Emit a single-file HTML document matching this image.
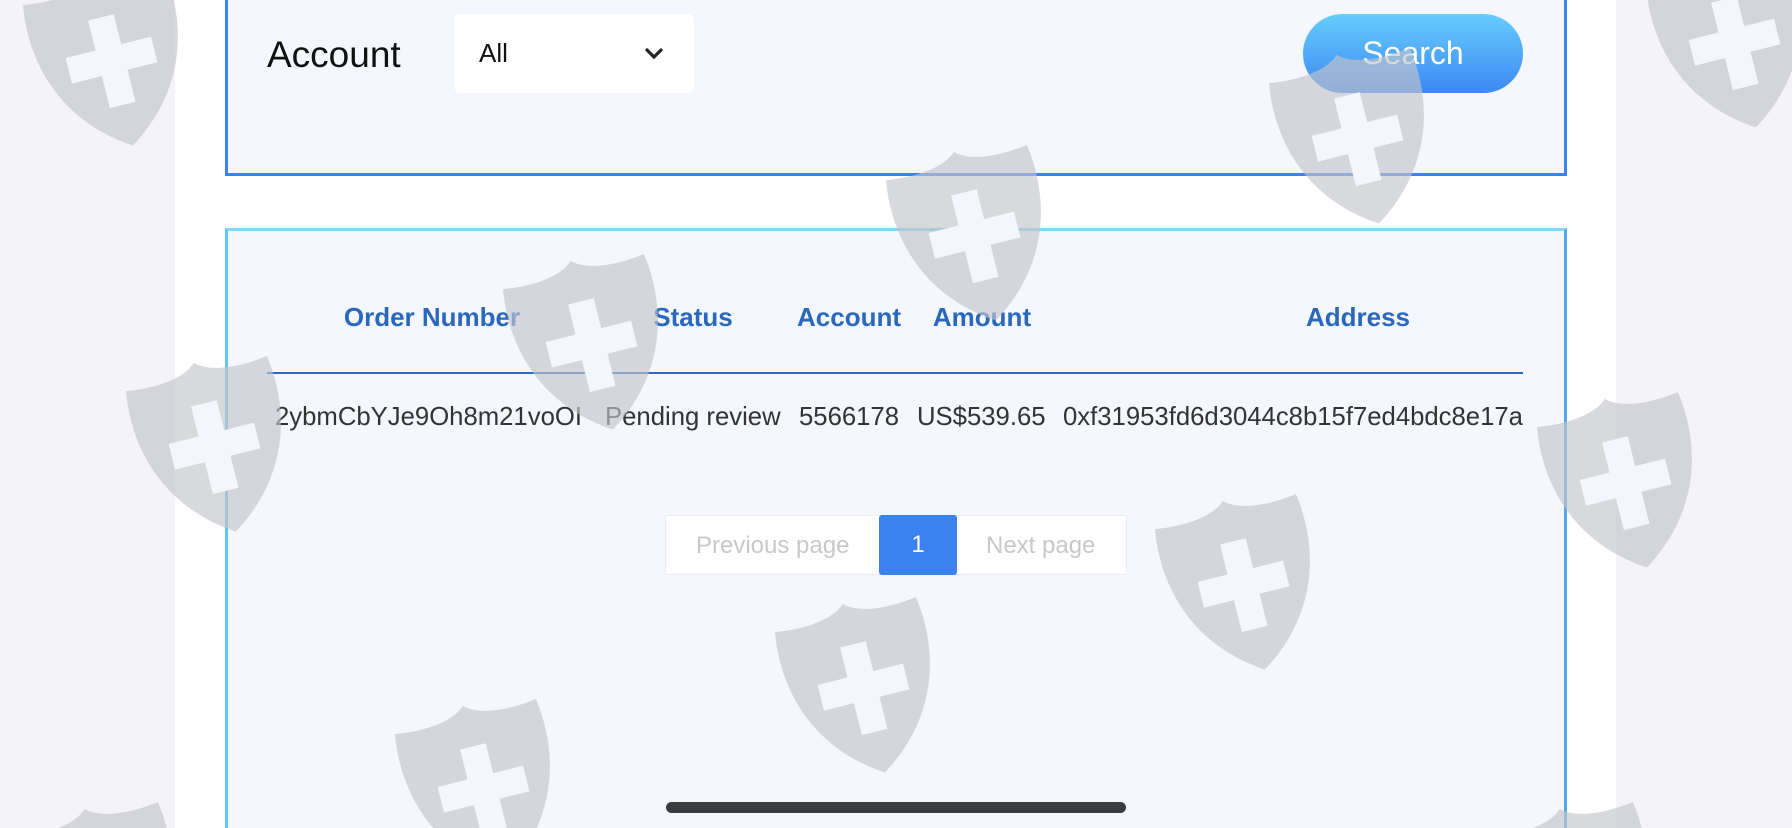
<!DOCTYPE html>
<html><head><meta charset="utf-8"><style>
*{margin:0;padding:0;box-sizing:border-box}
html{width:1792px;height:828px;overflow:hidden}
body{width:1792px;height:828px;overflow:hidden;background:#f4f3fc;font-family:"Liberation Sans",Arial,sans-serif;position:relative}
.clip{position:absolute;left:0;top:0;width:1792px;height:828px;overflow:hidden}
.col{position:absolute;left:175px;top:0;width:1441px;height:828px;background:#fff}
.box1{position:absolute;left:225px;top:-4px;width:1342px;height:180px;background:#f4f7fe;border:3px solid #3d82f3;border-top:none}
.box2{position:absolute;left:225px;top:228px;width:1342px;height:600px;background:#f4f7fe;border:3px solid #7fd6f7;border-right-color:#58a5ef;border-left-color:#62c3f5;border-bottom:none}
.lbl{position:absolute;left:267px;top:34px;font-size:37px;color:#111}
.sel{position:absolute;left:454px;top:14px;width:240px;height:79px;background:#fff;border-radius:7px}
.sel span{position:absolute;left:25px;top:24px;font-size:26px;color:#111}
.sel svg{position:absolute;left:190px;top:33px}
.btn{position:absolute;left:1303px;top:14px;width:220px;height:79px;border-radius:40px;background:linear-gradient(#66cdfc,#3d88f4);color:#fff;font-size:32px;text-align:center;line-height:79px}
.th{position:absolute;top:302px;font-size:26px;font-weight:bold;color:#2a68bd;transform:translateX(-50%);white-space:nowrap}
.line{position:absolute;left:267px;top:372px;width:1256px;height:2px;background:#2b68c2}
.row{position:absolute;left:267px;top:403px;width:1256px;height:32px;overflow:hidden;white-space:nowrap;font-size:25.7px;color:#333}
.row span{position:absolute;top:0}
.pg{position:absolute;left:665px;top:515px;width:462px;height:60px;background:#fff;border:1px solid #ececf2;border-radius:3px;font-size:24px;color:#c8c8c8}
.pg span{position:absolute;top:16px}
.pg .cur{position:absolute;left:213px;top:-1px;width:78px;height:60px;background:#3a83ef;color:#fff;border-radius:3px;text-align:center;line-height:60px}
.home{position:absolute;left:666px;top:802px;width:460px;height:11px;border-radius:6px;background:#3a3d40}
.wm{position:absolute;width:176px;height:190px;transform:translate(-50%,-50%) rotate(-14deg);pointer-events:none}
</style></head><body><div class="clip">
<div class="col"></div>
<div class="box1"></div>
<div class="box2"></div>
<div class="lbl">Account</div>
<div class="sel"><span>All</span><svg width="20" height="14" viewBox="0 0 20 14"><path d="M3 3l7 7 7-7" fill="none" stroke="#222" stroke-width="3.2" stroke-linecap="round"/></svg></div>
<div class="btn">Search</div>
<div class="th" style="left:432px">Order Number</div>
<div class="th" style="left:693px">Status</div>
<div class="th" style="left:849px">Account</div>
<div class="th" style="left:982px">Amount</div>
<div class="th" style="left:1358px">Address</div>
<div class="line"></div>
<div class="row"><span style="left:8px">2ybmCbYJe9Oh8m21voOI</span><span style="left:338px">Pending review</span><span style="left:532px">5566178</span><span style="left:650px">US$539.65</span><span style="left:796px">0xf31953fd6d3044c8b15f7ed4bdc8e17a</span></div>
<div class="pg"><span style="left:30px">Previous page</span><div class="cur">1</div><span style="left:320px">Next page</span></div>
<svg width="0" height="0" style="position:absolute"><defs><g id="sh"><path d="M80 10 C68 22 40 24 14 20 C6 70 20 130 80 168 C140 130 154 70 146 20 C120 24 92 22 80 10 Z" fill="#c3c4ca" opacity=".65"/><path d="M68 48h24v28h28v24h-28v30h-24v-30h-28v-24h28z" fill="#f4f6fc"/></g></defs></svg>
<svg class="wm" style="left:111px;top:58px" viewBox="0 0 160 172"><use href="#sh"/></svg>
<svg class="wm" style="left:1734px;top:40px" viewBox="0 0 160 172"><use href="#sh"/></svg>
<svg class="wm" style="left:1357px;top:136px" viewBox="0 0 160 172"><use href="#sh"/></svg>
<svg class="wm" style="left:974px;top:233px" viewBox="0 0 160 172"><use href="#sh"/></svg>
<svg class="wm" style="left:591px;top:342px" viewBox="0 0 160 172"><use href="#sh"/></svg>
<svg class="wm" style="left:214px;top:444px" viewBox="0 0 160 172"><use href="#sh"/></svg>
<svg class="wm" style="left:1625px;top:480px" viewBox="0 0 160 172"><use href="#sh"/></svg>
<svg class="wm" style="left:1243px;top:582px" viewBox="0 0 160 172"><use href="#sh"/></svg>
<svg class="wm" style="left:863px;top:685px" viewBox="0 0 160 172"><use href="#sh"/></svg>
<svg class="wm" style="left:483px;top:787px" viewBox="0 0 160 172"><use href="#sh"/></svg>
<svg class="wm" style="left:105px;top:890px" viewBox="0 0 160 172"><use href="#sh"/></svg>
<svg class="wm" style="left:1580px;top:890px" viewBox="0 0 160 172"><use href="#sh"/></svg>
<div class="home"></div>
</div></body></html>
